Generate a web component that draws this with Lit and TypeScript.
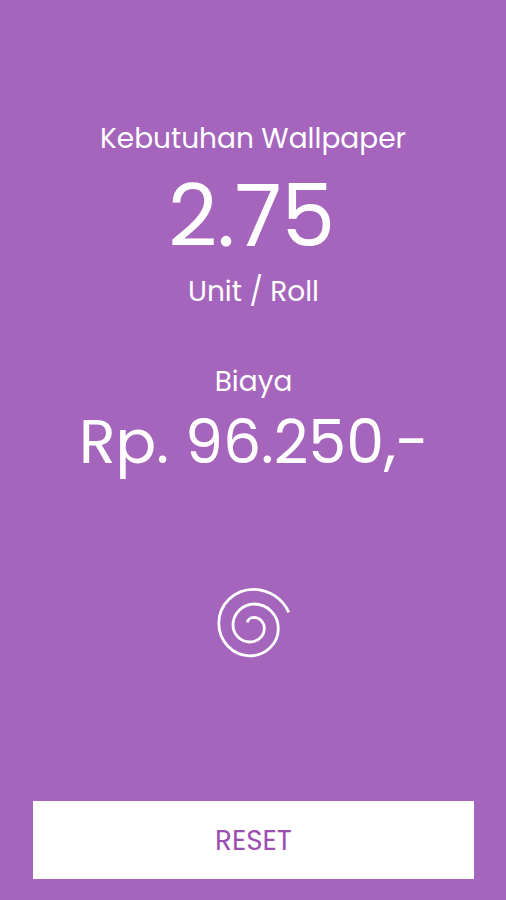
import { LitElement, html, css } from "lit";
import { customElement } from "lit/decorators.js";

@customElement("app-root")
export class AppRoot extends LitElement {
  static styles = css`
    :host {
      display: flex;
      flex-direction: column;
      align-items: center;
      box-sizing: border-box;
      width: 100%;
      height: 100vh;
      padding: 118px 32px 21px 33px;
      background: #a565bc;
      color: #fff;
      font-family: Poppins, Inter, "Liberation Sans", sans-serif;
      white-space: nowrap;
      overflow: hidden;
    }
    .label { font-size: 28px; line-height: 42px; height: 42px; }
    .need { margin-right: 1px; }
    .amount { font-size: 86px; line-height: 112px; height: 112px; letter-spacing: -0.4px; margin-right: 4px; }
    .unit { margin-top: -1px; }
    .cost { margin-top: 48px; }
    .price { font-size: 60.2px; line-height: 80px; height: 80px; margin-top: -1px; margin-left: 1px; }
    .spiral { display: block; width: 76px; height: 72px; margin-top: 105px; }
    .reset {
      box-sizing: border-box;
      width: 100%;
      height: 78px;
      margin-top: auto;
      padding: 1px 0 0;
      border: 0;
      background: #fff;
      color: #9c4fb2;
      font: inherit;
      font-size: 27.8px;
      line-height: 78px;
    }
  `;

  render() {
    return html`
      <div class="label need">Kebutuhan Wallpaper</div>
      <div class="amount">2.75</div>
      <div class="label unit">Unit / Roll</div>
      <div class="label cost">Biaya</div>
      <div class="price">Rp. 96.250,-</div>
      <svg class="spiral" viewBox="216 587 76 72" fill="none" stroke="#fff" stroke-width="2.8">
        <path d="M247.2 622.4A7.5 6.5 0 0 1 254 617.4A10.3 11 0 0 1 264.3 628.4A14.3 13.6 0 0 1 250 642A17 17 0 0 1 233 625A21.3 21 0 0 1 254.3 604A24 24.4 0 0 1 278.3 628.4A28.3 27.4 0 0 1 250 655.8A31.2 32.5 0 0 1 218.8 623.3A34.7 34 0 0 1 253.5 589.3A39 39 0 0 1 288.8 612.4" />
      </svg>
      <button class="reset">RESET</button>
    `;
  }
}
